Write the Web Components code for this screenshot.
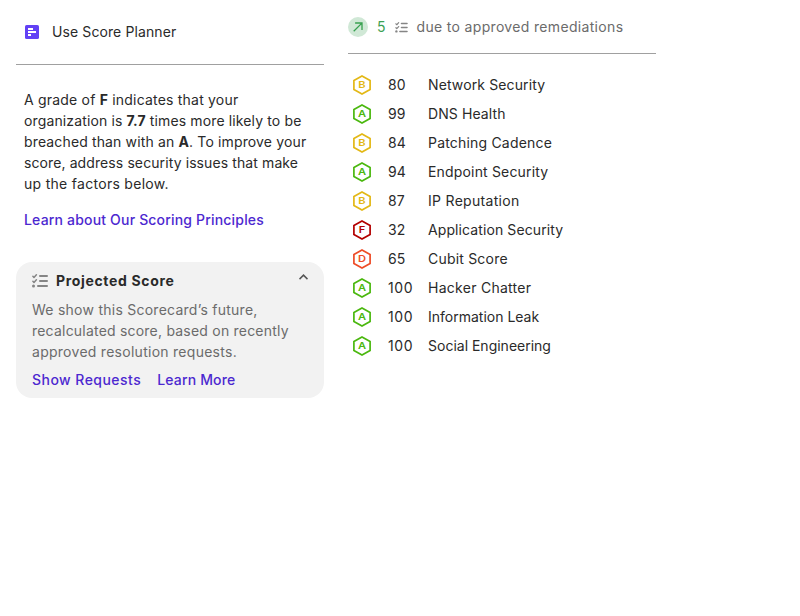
<!DOCTYPE html>
<html lang="en">
<head>
<meta charset="utf-8">
<title>Score Planner</title>
<style>
body{margin:0;background:#fff;font:14px/21px Inter,sans-serif;color:#2a2a2a}
</style>
</head>
<body>
<score-page></score-page>
<script>
const define = (name, html, setup) => {
  const t = document.createElement('template');
  t.innerHTML = html;
  customElements.define(name, class extends HTMLElement {
    constructor() {
      super();
      this.attachShadow({mode: 'open'}).append(t.content.cloneNode(true));
    }
    connectedCallback() { if (setup) setup(this, this.shadowRoot); }
  });
};

define('checklist-icon', `<style>:host{display:block;color:#858585;width:16px;height:14px;flex:none}svg{display:block;width:100%;height:100%}</style>
<svg viewBox="0 0 16 14" fill="none" stroke="currentColor" stroke-linecap="round" stroke-linejoin="round">
<path stroke-width="1.5" d="M.9 2.3 2 3.5 4.4.8M.9 7.3 2 8.5 4.4 5.8"/>
<path stroke-width="2" d="M8 2H15M8 7H15M6 12H15"/>
<circle cx="1.5" cy="12" r="1.5" fill="currentColor" stroke="none"/></svg>`);

define('planner-icon', `<style>:host{display:block;width:14px;height:14px}svg{display:block}</style>
<svg width="14" height="14" viewBox="0 0 14 14"><rect width="14" height="14" rx="1.6" fill="#6241f5"/><path fill="#fff" d="M3 3h5v2H3zM3 6h8v2H3zM3 9h3v2H3z"/></svg>`);

define('trend-badge', `<style>:host{display:flex;width:20px;height:20px;border-radius:50%;background:#d0e8d6;flex:none}</style>
<svg width="20" height="20" viewBox="0 0 20 20" fill="none" stroke="#37a04f" stroke-width="1.3"><path d="M5.7 14.2 13.9 6.1M7.1 6H14V12.9"/></svg>`);

define('chevron-icon', `<style>:host{display:block}svg{display:block}</style>
<svg width="9" height="6" viewBox="0 0 9 6" fill="none" stroke="#555" stroke-width="1.5"><path d="M.5 5.1 4.5 1.1 8.5 5.1"/></svg>`);

define('text-link', `<style>:host{display:inline-block;color:#4c28d0;font-weight:500;cursor:pointer}</style><slot></slot>`);

define('text-line', `<style>:host{display:block;white-space:nowrap}</style><slot></slot>`);

define('grade-hex', `<style>:host{display:block;width:20px;height:22px}svg{display:block}text{font:600 9.6px Inter,sans-serif;letter-spacing:0}</style>
<svg width="20" height="22" viewBox="0 0 20 22"><path d="M10 1.9 18.1 6.4V15.6L10 20.1 1.9 15.6V6.4Z" fill="none" stroke="currentColor" stroke-width="1.7"/><text transform="translate(10 14.4) scale(1.16 1)" text-anchor="middle" fill="currentColor"></text></svg>`,
(el, root) => {
  const g = el.getAttribute('grade');
  el.style.color = {A: '#4bb80f', B: '#e3b816', D: '#ee4c27', F: '#b30000'}[g];
  root.querySelector('text').textContent = g;
});

define('factor-row', `<style>:host{display:grid;grid-template-columns:36px 40px 1fr;align-items:center;height:29px;padding-left:4px}span{letter-spacing:0}.wide{letter-spacing:.6px}</style>
<div class="grade"></div><span></span><slot></slot>`,
(el, root) => {
  root.querySelector('.grade').innerHTML = '<grade-hex grade="' + el.getAttribute('grade') + '"></grade-hex>';
  const score = root.querySelector('span');
  score.textContent = el.getAttribute('score');
  score.classList.toggle('wide', score.textContent.length > 2);
});

define('planner-header', `<style>:host{display:flex;align-items:center;gap:13px;height:64px;padding-left:9px;border-bottom:1px solid #a0a0a0}span{margin-top:-1px;letter-spacing:.1px}</style><planner-icon></planner-icon><span><slot></slot></span>`);

define('remediation-header', `<style>:host{display:flex;align-items:center;height:53px;border-bottom:1px solid #a0a0a0;color:#6b6b6b;letter-spacing:.33px}
.n{color:#3ca153;margin:0 9px;letter-spacing:0}checklist-icon{width:13px;height:11px;margin:1px 9px 0 0}</style>
<trend-badge></trend-badge><span class="n">5</span><checklist-icon></checklist-icon><slot></slot>`);

define('projected-card', `<style>:host{display:block;background:#f2f2f2;border-radius:16px;padding:7px 16px 8px;color:#6b6b6b}
header{display:flex;align-items:center;height:22px}checklist-icon{margin-top:2px}b{color:#2a2a2a;margin-left:8px;flex:1;letter-spacing:.66px}chevron-icon{margin-bottom:7px}
.body{margin:8px 0 7px}footer{display:flex;gap:16px}</style>
<header><checklist-icon></checklist-icon><b>Projected Score</b><chevron-icon></chevron-icon></header>
<div class="body"><slot></slot></div><footer><slot name="links"></slot></footer>`);

define('score-page', `<style>
:host{display:grid;grid-template-columns:308px 308px;column-gap:24px;padding-left:16px;align-items:start}
.intro{margin:24px 8px 15px}.learn{margin:0 8px 32px}.factors{padding-top:16px}
</style>
<section><planner-header>Use Score Planner</planner-header>
<div class="intro"><text-line style="letter-spacing:.2px">A grade of <b>F</b> indicates that your</text-line><text-line style="letter-spacing:.13px">organization is <b>7.7</b> times more likely to be</text-line><text-line style="letter-spacing:.14px">breached than with an <b>A</b>. To improve your</text-line><text-line style="letter-spacing:.1px">score, address security issues that make</text-line><text-line style="letter-spacing:.29px">up the factors below.</text-line></div>
<div class="learn"><text-link style="letter-spacing:.18px">Learn about Our Scoring Principles</text-link></div>
<projected-card><text-line style="letter-spacing:.25px">We show this Scorecard’s future,</text-line><text-line style="letter-spacing:.21px">recalculated score, based on recently</text-line><text-line style="letter-spacing:.27px">approved resolution requests.</text-line><text-link slot="links" style="letter-spacing:.46px">Show Requests</text-link><text-link slot="links" style="letter-spacing:.17px">Learn More</text-link></projected-card>
</section>
<section><remediation-header>due to approved remediations</remediation-header>
<div class="factors">
<factor-row style="letter-spacing:.12px" grade="B" score="80">Network Security</factor-row>
<factor-row style="letter-spacing:.1px" grade="A" score="99">DNS Health</factor-row>
<factor-row style="letter-spacing:.19px" grade="B" score="84">Patching Cadence</factor-row>
<factor-row style="letter-spacing:.17px" grade="A" score="94">Endpoint Security</factor-row>
<factor-row style="letter-spacing:.3px" grade="B" score="87">IP Reputation</factor-row>
<factor-row style="letter-spacing:.1px" grade="F" score="32">Application Security</factor-row>
<factor-row style="letter-spacing:.2px" grade="D" score="65">Cubit Score</factor-row>
<factor-row style="letter-spacing:.27px" grade="A" score="100">Hacker Chatter</factor-row>
<factor-row grade="A" score="100">Information Leak</factor-row>
<factor-row grade="A" score="100">Social Engineering</factor-row>
</div></section>`);
</script>
</body>
</html>
